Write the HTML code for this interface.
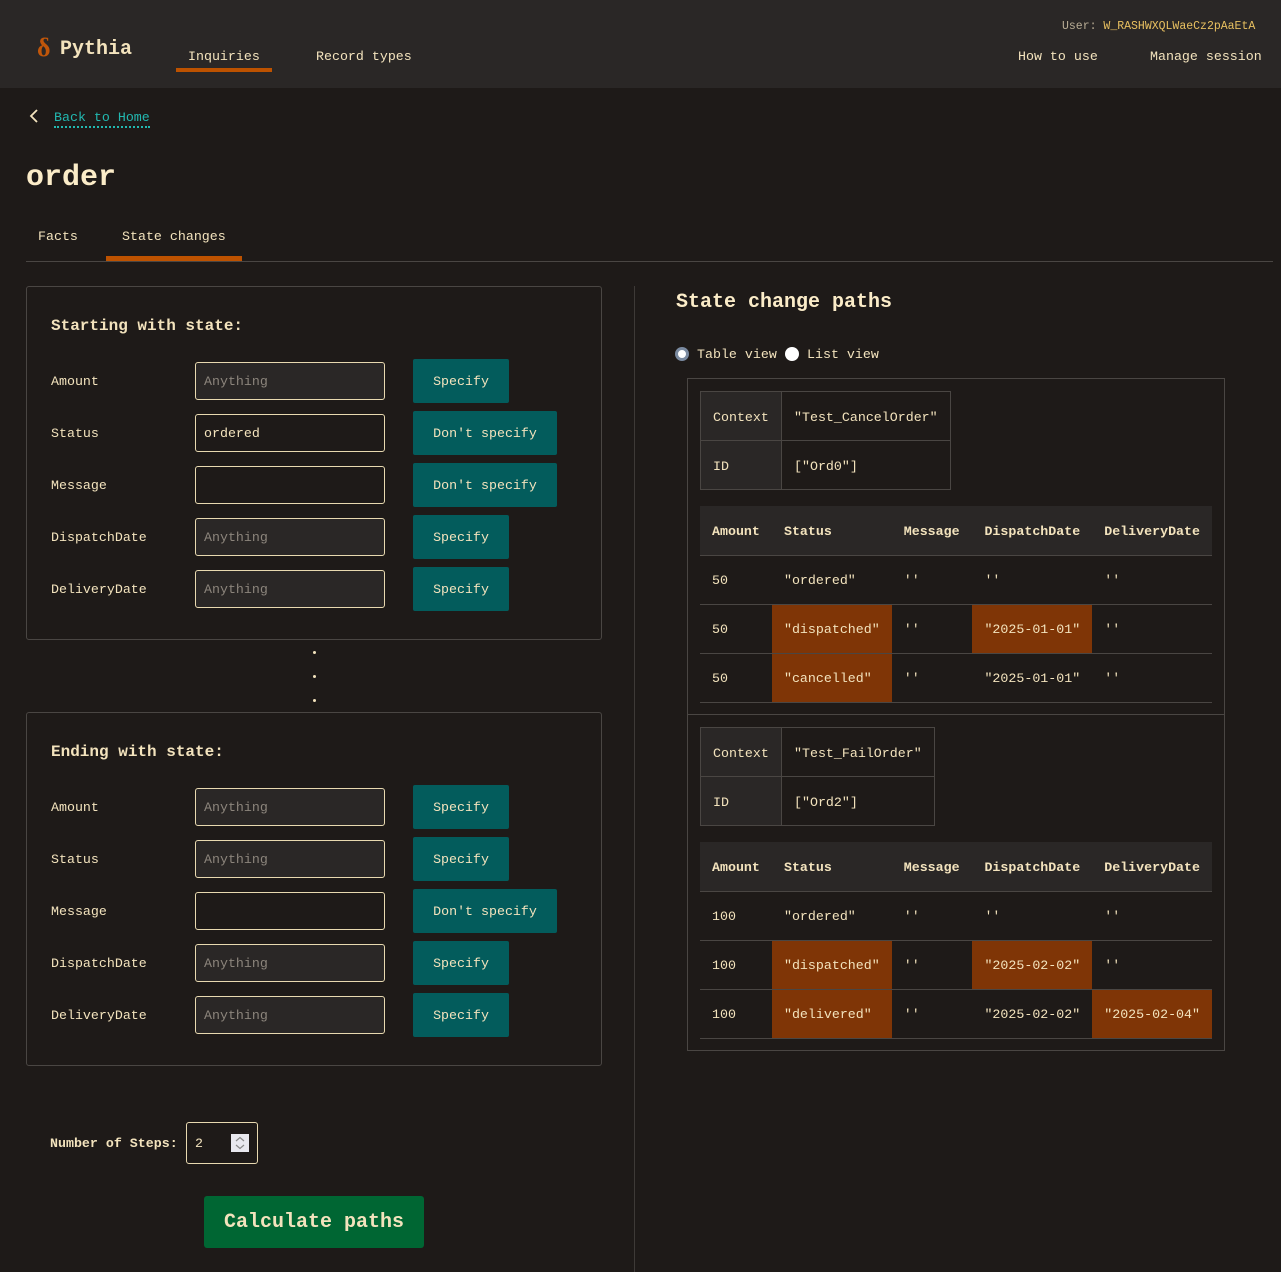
<!DOCTYPE html>
<html><head><meta charset="utf-8"><style>
*{box-sizing:border-box;margin:0;padding:0}
body{width:1281px;height:1272px;background:#1e1a18;color:#f3e3bd;font-family:"Liberation Mono","DejaVu Sans Mono",monospace;font-size:13.3px;position:relative;overflow:hidden}
.a{position:absolute;white-space:nowrap}
.hdr{position:absolute;left:0;top:0;width:1281px;height:88px;background:#2a2726}
.box{position:absolute;left:26px;width:576px;border:1px solid #4a4643;border-radius:3px}
.inp{position:absolute;left:195px;width:190px;height:38px;border:1px solid #e8d9b0;border-radius:3px;background:#2a2726;padding:0 8px;line-height:38px;color:#8c857c}
.btn{position:absolute;left:413px;height:44px;background:#035c5c;border-radius:2px;line-height:46px;text-align:center;color:#f3e3bd}
.lbl{position:absolute;left:51px}
table{border-collapse:collapse;position:absolute}
.ct td{border:1px solid #4a4643;height:49px;padding:2px 12px 0}
.ct td:first-child{background:#2a2726}
.dt{width:512px}
.dt th{background:#2a2726;height:49px;text-align:left;padding:2px 12px 0;font-weight:bold;border-bottom:1px solid #4a4643}
.dt td{height:49px;padding:2px 12px 0;border-bottom:1px solid #4a4643}
.h{background:#7f3506}
</style></head><body>
<div class="hdr"></div>
<div class="a" style="left:37px;top:33px;font-size:26px;font-weight:bold;color:#c0560a;font-family:'Liberation Serif',serif">δ</div>
<div class="a" style="left:60px;top:38px;font-size:20px;font-weight:bold;color:#f3e3bd">Pythia</div>
<div class="a" style="left:188px;top:49px">Inquiries</div>
<div class="a" style="left:176px;top:68px;width:96px;height:4px;background:#bd5200"></div>
<div class="a" style="left:316px;top:49px">Record types</div>
<div class="a" style="left:1062px;top:20px;font-size:11.5px;color:#b9ad95">User: <span style="color:#e8c060">W_RASHWXQLWaeCz2pAaEtA</span></div>
<div class="a" style="left:1018px;top:49px">How to use</div>
<div class="a" style="left:1150px;top:49px">Manage session</div>

<svg class="a" style="left:28px;top:108px" width="12" height="16"><path d="M9 2 L3 8 L9 14" stroke="#f3e3bd" stroke-width="1.8" fill="none"/></svg>
<div class="a" style="left:54px;top:109px;color:#22b8b0;border-bottom:2px dotted #22b8b0;line-height:17px">Back to Home</div>
<div class="a" style="left:26px;top:161px;font-size:30px;font-weight:bold;color:#fbecc8">order</div>
<div class="a" style="left:38px;top:229px">Facts</div>
<div class="a" style="left:122px;top:229px">State changes</div>
<div class="a" style="left:106px;top:256px;width:136px;height:5px;background:#bd5200"></div>
<div class="a" style="left:26px;top:261px;width:1247px;height:1px;background:#4a4643"></div>
<div class="a" style="left:634px;top:286px;width:1px;height:986px;background:#3e3a37"></div>

<div class="box" style="top:286px;height:354px"></div>
<div class="a" style="left:51px;top:317px;font-size:16px;font-weight:bold">Starting with state:</div>
<div class="lbl" style="top:374px">Amount</div><div class="inp" style="top:362px">Anything</div><div class="btn" style="top:359px;width:96px">Specify</div>
<div class="lbl" style="top:426px">Status</div><div class="inp" style="top:414px;background:#1e1a18;color:#f3e3bd">ordered</div><div class="btn" style="top:411px;width:144px">Don't specify</div>
<div class="lbl" style="top:478px">Message</div><div class="inp" style="top:466px;background:#1e1a18"></div><div class="btn" style="top:463px;width:144px">Don't specify</div>
<div class="lbl" style="top:530px">DispatchDate</div><div class="inp" style="top:518px">Anything</div><div class="btn" style="top:515px;width:96px">Specify</div>
<div class="lbl" style="top:582px">DeliveryDate</div><div class="inp" style="top:570px">Anything</div><div class="btn" style="top:567px;width:96px">Specify</div>

<div class="a" style="left:313px;top:651px;width:3px;height:3px;background:#f3e3bd;border-radius:50%"></div>
<div class="a" style="left:313px;top:675px;width:3px;height:3px;background:#f3e3bd;border-radius:50%"></div>
<div class="a" style="left:313px;top:699px;width:3px;height:3px;background:#f3e3bd;border-radius:50%"></div>

<div class="box" style="top:712px;height:354px"></div>
<div class="a" style="left:51px;top:743px;font-size:16px;font-weight:bold">Ending with state:</div>
<div class="lbl" style="top:800px">Amount</div><div class="inp" style="top:788px">Anything</div><div class="btn" style="top:785px;width:96px">Specify</div>
<div class="lbl" style="top:852px">Status</div><div class="inp" style="top:840px">Anything</div><div class="btn" style="top:837px;width:96px">Specify</div>
<div class="lbl" style="top:904px">Message</div><div class="inp" style="top:892px;background:#1e1a18"></div><div class="btn" style="top:889px;width:144px">Don't specify</div>
<div class="lbl" style="top:956px">DispatchDate</div><div class="inp" style="top:944px">Anything</div><div class="btn" style="top:941px;width:96px">Specify</div>
<div class="lbl" style="top:1008px">DeliveryDate</div><div class="inp" style="top:996px">Anything</div><div class="btn" style="top:993px;width:96px">Specify</div>

<div class="a" style="left:50px;top:1136px;font-weight:bold">Number of Steps:</div>
<div class="a" style="left:186px;top:1122px;width:72px;height:42px;border:1px solid #e8d9b0;border-radius:3px;padding:0 8px;line-height:42px">2</div>
<svg class="a" style="left:231px;top:1134px" width="18" height="18"><rect width="18" height="18" fill="#e8e8ee"/><path d="M5 7 L9 3.5 L13 7 M5 11 L9 14.5 L13 11" stroke="#888" stroke-width="1.2" fill="none"/></svg>
<div class="a" style="left:204px;top:1196px;width:220px;height:52px;background:#006633;border-radius:3px;font-size:20px;font-weight:bold;line-height:54px;text-align:center">Calculate paths</div>

<div class="a" style="left:676px;top:291px;font-size:20px;font-weight:bold;color:#fbecc8">State change paths</div>
<div class="a" style="left:675px;top:347px;width:14px;height:14px;border-radius:50%;background:#fff;border:3px solid #7a8aa0"></div>
<div class="a" style="left:697px;top:347px">Table view</div>
<div class="a" style="left:785px;top:347px;width:14px;height:14px;border-radius:50%;background:#fff"></div>
<div class="a" style="left:807px;top:347px">List view</div>

<div class="a" style="left:687px;top:378px;width:538px;height:673px;border:1px solid #4a4643"></div>
<div class="a" style="left:687px;top:714px;width:538px;height:1px;background:#4a4643"></div>

<table class="ct" style="left:700px;top:391px"><tr><td style="width:81px">Context</td><td>"Test_CancelOrder"</td></tr><tr><td>ID</td><td>["Ord0"]</td></tr></table>
<table class="dt" style="left:700px;top:506px">
<tr><th style="width:72px">Amount</th><th style="width:119px">Status</th><th style="width:81px">Message</th><th style="width:119px">DispatchDate</th><th>DeliveryDate</th></tr>
<tr><td>50</td><td>"ordered"</td><td>''</td><td>''</td><td>''</td></tr>
<tr><td>50</td><td class="h">"dispatched"</td><td>''</td><td class="h">"2025-01-01"</td><td>''</td></tr>
<tr><td>50</td><td class="h">"cancelled"</td><td>''</td><td>"2025-01-01"</td><td>''</td></tr>
</table>

<table class="ct" style="left:700px;top:727px"><tr><td style="width:81px">Context</td><td>"Test_FailOrder"</td></tr><tr><td>ID</td><td>["Ord2"]</td></tr></table>
<table class="dt" style="left:700px;top:842px">
<tr><th style="width:72px">Amount</th><th style="width:119px">Status</th><th style="width:81px">Message</th><th style="width:119px">DispatchDate</th><th>DeliveryDate</th></tr>
<tr><td>100</td><td>"ordered"</td><td>''</td><td>''</td><td>''</td></tr>
<tr><td>100</td><td class="h">"dispatched"</td><td>''</td><td class="h">"2025-02-02"</td><td>''</td></tr>
<tr><td>100</td><td class="h">"delivered"</td><td>''</td><td>"2025-02-02"</td><td class="h">"2025-02-04"</td></tr>
</table>
</body></html>
